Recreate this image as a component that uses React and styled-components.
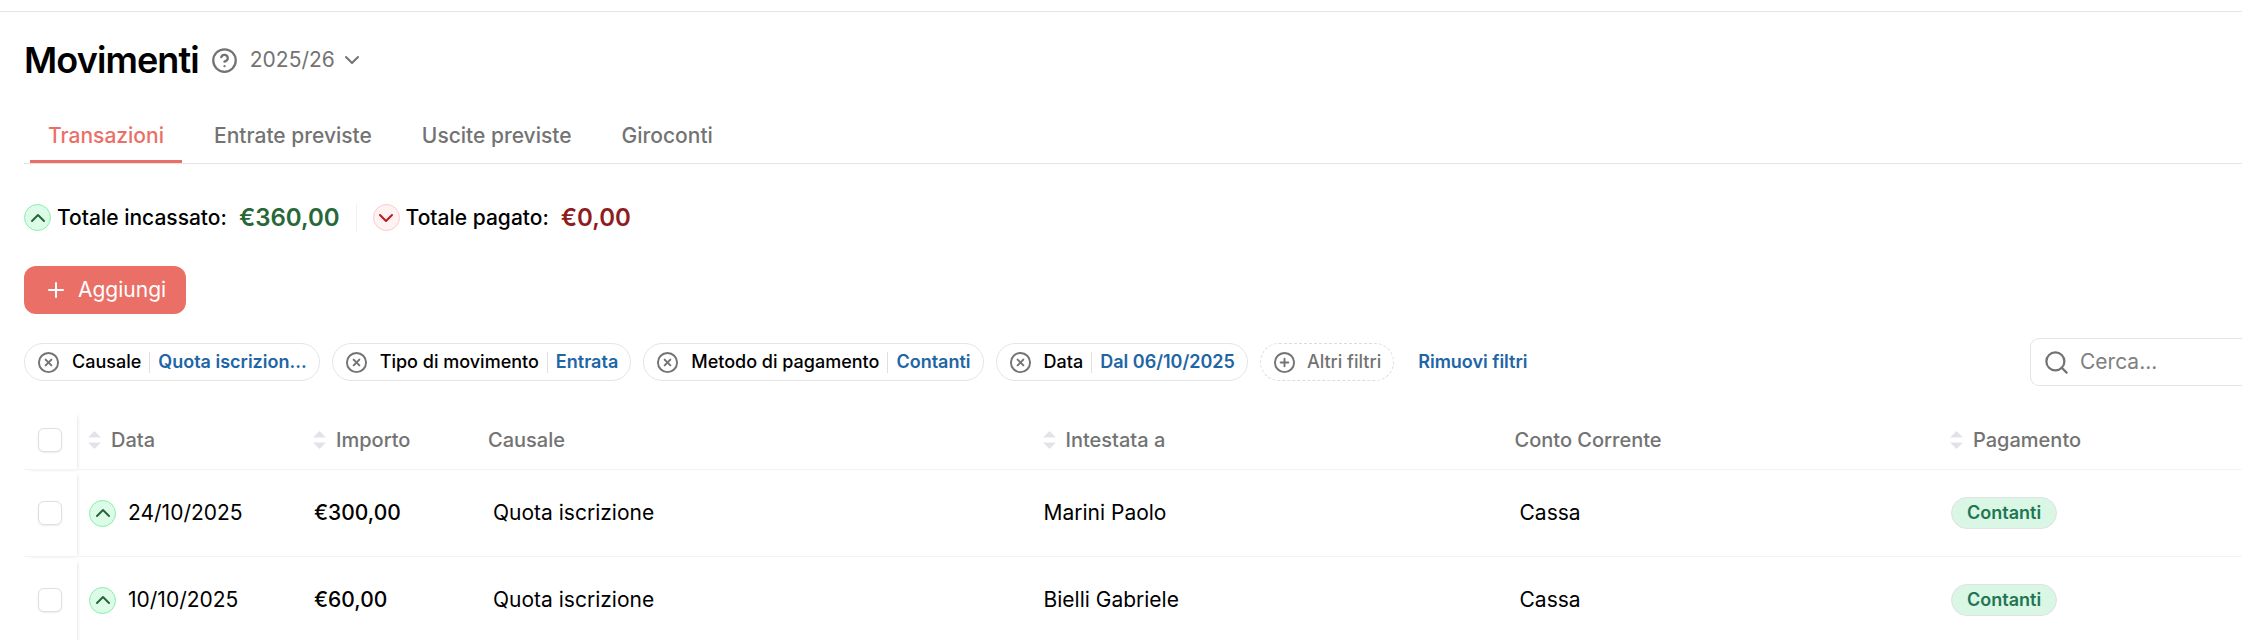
import styled, { createGlobalStyle } from "styled-components"
import { ChevronDown, ChevronUp, CircleHelp, CirclePlus, CircleX, Plus, Search } from "lucide-react"

const GlobalStyle = createGlobalStyle`
    * {
        box-sizing: border-box;
    }

    body {
        margin: 0;
        background-color: #ffffff;
        color: #0a0a0a;
        font-family: Inter, "Liberation Sans", sans-serif;
        font-size: 21px;
        line-height: 30px;
        overflow: hidden;
    }

    button, input, select {
        margin: 0;
        padding: 0;
        border: none;
        background: none;
        color: inherit;
        font: inherit;
    }

    svg {
        display: block;
        flex-shrink: 0;
    }
`

const Page = styled.main`
    display: flex;
    flex-direction: column;
    margin-top: 11px;
    padding: 27px 0 0 24px;
    border-top: 1px solid #e5e5e5;
`

const TitleRow = styled.header`
    display: flex;
    align-items: center;
    gap: 12px;
    height: 42px;
`

const Title = styled.h1`
    margin: 0;
    color: #000000;
    font-size: 36px;
    font-weight: 600;
    line-height: 42px;
    letter-spacing: -0.025em;
`

const HelpButton = styled.button`
    color: #737373;
`

const YearPicker = styled.label`
    display: grid;
    grid-template-columns: auto 24px;
    align-items: center;
    color: #737373;
`

const YearSelect = styled.select`
    grid-area: 1 / 1 / 2 / 3;
    appearance: none;
    padding-right: 28px;
`

const YearArrow = styled(ChevronDown)`
    grid-area: 1 / 2 / 2 / 3;
    pointer-events: none;
`

const Tabs = styled.nav`
    display: flex;
    gap: 14px;
    margin-top: 30px;
    padding-left: 6px;
    border-bottom: 1px solid #e5e5e5;
`

const Tab = styled.a`
    padding: 10px 18px 9px;
    border-bottom: 3px solid ${({ $active }) => ($active ? "#ea7067" : "transparent")};
    color: ${({ $active }) => ($active ? "#ea7067" : "#737373")};
    font-weight: 500;
    text-decoration: none;
`

const Totals = styled.section`
    display: flex;
    align-items: center;
    gap: 16px;
    height: 29px;
    margin-top: 39px;
`

const Total = styled.div`
    display: flex;
    align-items: center;
    height: 29px;
    color: #000000;
    font-weight: 500;
`

const TotalLabel = styled.span`
    margin: 0 12px 0 6px;
`

const Amount = styled.strong`
    color: ${({ $out }) => ($out ? "#8f1d1d" : "#276738")};
    font-size: 24px;
    font-weight: 600;
`

const Direction = styled.span`
    display: flex;
    align-items: center;
    justify-content: center;
    width: 27px;
    height: 27px;
    border: 1px solid ${({ $out }) => ($out ? "#fecaca" : "#86efac")};
    border-radius: 50%;
    background-color: ${({ $out }) => ($out ? "#fef2f2" : "#dcfce7")};
    color: ${({ $out }) => ($out ? "#b91c1c" : "#276738")};
`

const Divider = styled.span`
    width: 1px;
    height: ${({ $tall }) => ($tall ? "28px" : "21px")};
    background-color: ${({ $tall }) => ($tall ? "#f0f0f0" : "#e0e0e0")};
`

const AddButton = styled.button`
    display: flex;
    align-items: center;
    align-self: flex-start;
    gap: 10px;
    height: 48px;
    margin-top: 34px;
    padding: 0 20px;
    border-radius: 12px;
    background-color: #ea7067;
    color: #ffffff;
`

const Toolbar = styled.section`
    display: flex;
    align-items: center;
    justify-content: space-between;
    margin-top: 24px;
`

const Filters = styled.div`
    display: flex;
    align-items: center;
    gap: 12px;
    font-size: 18px;
    font-weight: 500;
`

const Chip = styled.div`
    display: flex;
    align-items: center;
    gap: 8px;
    height: 38px;
    padding: 0 12px;
    border: 1px solid #e5e5e5;
    border-radius: 19px;
    color: #000000;
`

const ChipRemove = styled.button`
    margin-right: 4px;
    color: #737373;
`

const ChipValue = styled.button`
    color: #2065a5;
    font-weight: 600;
`

const MoreFilters = styled.button`
    display: flex;
    align-items: center;
    gap: 11px;
    height: 38px;
    padding: 0 12px;
    border: 1px dashed #dcdcdc;
    border-radius: 19px;
    color: #737373;
`

const ClearFilters = styled.button`
    margin-left: 12px;
    color: #2065a5;
    font-weight: 600;
`

const SearchBox = styled.label`
    display: flex;
    align-items: center;
    gap: 10px;
    width: 212px;
    height: 48px;
    padding-left: 12px;
    border: 1px solid #e5e5e5;
    border-right: none;
    border-radius: 9px 0 0 9px;
    color: #737373;
`

const SearchInput = styled.input`
    min-width: 0;
    flex: 1;
    outline: none;

    &::placeholder {
        color: #808080;
        opacity: 1;
    }
`

const Table = styled.table`
    width: 100%;
    margin-top: 25px;
    border-spacing: 0;
    table-layout: fixed;
`

const Col = styled.col`
    width: ${({ $width }) => $width};
`

const HeadCell = styled.th`
    height: 59px;
    padding: 0 11px;
    border-bottom: 1px solid #f3f3f3;
    color: #737373;
    font-size: 20px;
    font-weight: 500;
    text-align: left;
`

const SortButton = styled.button`
    display: flex;
    align-items: center;
    gap: 10px;
`

const Cell = styled.td`
    height: 87px;
    padding: 0 ${({ $inset }) => ($inset ? "16px" : "12px")};
    border-bottom: 1px solid #f3f3f3;
    color: #000000;
    font-weight: ${({ $strong }) => ($strong ? 500 : 400)};
`

const CheckCell = styled.td`
    padding: 0 14px;
    border-bottom: 1px solid #f3f3f3;
    box-shadow: 3px 2px 4px -3px rgba(0, 0, 0, 0.16);
`

const Checkbox = styled.input`
    display: block;
    appearance: none;
    width: 24px;
    height: 24px;
    border: 1px solid #dfdfe2;
    border-radius: 6px;
    background-color: #ffffff;
    box-shadow: 0 1px 2px rgba(0, 0, 0, 0.08);
`

const DateValue = styled.div`
    display: flex;
    align-items: center;
    gap: 12px;
`

const Badge = styled.span`
    display: inline-flex;
    align-items: center;
    height: 32px;
    padding: 0 15px;
    border: 1px solid #dfe3e1;
    border-radius: 16px;
    background-color: #d9f7e4;
    color: #227553;
    font-size: 18px;
    font-weight: 600;
`

const tabs = ["Transazioni", "Entrate previste", "Uscite previste", "Giroconti"]

const filters = [
    { name: "Causale", value: "Quota iscrizion..." },
    { name: "Tipo di movimento", value: "Entrata" },
    { name: "Metodo di pagamento", value: "Contanti" },
    { name: "Data", value: "Dal 06/10/2025" },
]

const columns = [
    { name: "Data", width: "225px", sortable: true },
    { name: "Importo", width: "175px", sortable: true },
    { name: "Causale", width: "25%" },
    { name: "Intestata a", width: "472px", sortable: true },
    { name: "Conto Corrente", width: "auto" },
    { name: "Pagamento", width: "303px", sortable: true },
]

const movements = [
    { date: "24/10/2025", amount: "€300,00", reason: "Quota iscrizione", holder: "Marini Paolo", account: "Cassa", payment: "Contanti" },
    { date: "10/10/2025", amount: "€60,00", reason: "Quota iscrizione", holder: "Bielli Gabriele", account: "Cassa", payment: "Contanti" },
]

function SortIcon() {
    return (
        <svg width="13" height="20" viewBox="0 0 13 20" fill="#e2e3e8" aria-hidden="true">
            <path d="M6.5 1 L13 7.5 H0 Z" />
            <path d="M6.5 19 L0 12.5 H13 Z" />
        </svg>
    )
}

function App() {
    return (
        <>
            <GlobalStyle />
            <Page>
                <TitleRow>
                    <Title>Movimenti</Title>
                    <HelpButton type="button" aria-label="Aiuto">
                        <CircleHelp size={27} strokeWidth={2} />
                    </HelpButton>
                    <YearPicker>
                        <YearSelect aria-label="Anno" defaultValue="2025/26">
                            <option>2025/26</option>
                        </YearSelect>
                        <YearArrow size={24} strokeWidth={2} />
                    </YearPicker>
                </TitleRow>
                <Tabs>
                    {tabs.map((tab, i) => (
                        <Tab key={tab} href="#" $active={i === 0}>{tab}</Tab>
                    ))}
                </Tabs>
                <Totals>
                    <Total>
                        <Direction><ChevronUp size={24} /></Direction>
                        <TotalLabel>Totale incassato:</TotalLabel>
                        <Amount>€360,00</Amount>
                    </Total>
                    <Divider $tall />
                    <Total>
                        <Direction $out><ChevronDown size={24} /></Direction>
                        <TotalLabel>Totale pagato:</TotalLabel>
                        <Amount $out>€0,00</Amount>
                    </Total>
                </Totals>
                <AddButton type="button">
                    <Plus size={24} strokeWidth={2} />
                    Aggiungi
                </AddButton>
                <Toolbar>
                    <Filters>
                        {filters.map((filter) => (
                            <Chip key={filter.name}>
                                <ChipRemove type="button" aria-label={`Rimuovi ${filter.name}`}>
                                    <CircleX size={23} strokeWidth={2} />
                                </ChipRemove>
                                {filter.name}
                                <Divider />
                                <ChipValue type="button">{filter.value}</ChipValue>
                            </Chip>
                        ))}
                        <MoreFilters type="button">
                            <CirclePlus size={23} strokeWidth={2} />
                            Altri filtri
                        </MoreFilters>
                        <ClearFilters type="button">Rimuovi filtri</ClearFilters>
                    </Filters>
                    <SearchBox>
                        <Search size={27} strokeWidth={2} />
                        <SearchInput type="text" placeholder="Cerca..." aria-label="Cerca" />
                    </SearchBox>
                </Toolbar>
                <Table>
                    <colgroup>
                        <Col $width="53px" />
                        {columns.map((column) => (
                            <Col key={column.name} $width={column.width} />
                        ))}
                    </colgroup>
                    <thead>
                        <tr>
                            <CheckCell as="th">
                                <Checkbox type="checkbox" aria-label="Seleziona tutti" />
                            </CheckCell>
                            {columns.map((column) => (
                                <HeadCell key={column.name} scope="col">
                                    {column.sortable ? (
                                        <SortButton type="button">
                                            <SortIcon />
                                            {column.name}
                                        </SortButton>
                                    ) : column.name}
                                </HeadCell>
                            ))}
                        </tr>
                    </thead>
                    <tbody>
                        {movements.map((row) => (
                            <tr key={row.date}>
                                <CheckCell>
                                    <Checkbox type="checkbox" aria-label={`Seleziona ${row.date}`} />
                                </CheckCell>
                                <Cell>
                                    <DateValue>
                                        <Direction><ChevronUp size={24} /></Direction>
                                        {row.date}
                                    </DateValue>
                                </Cell>
                                <Cell $strong>{row.amount}</Cell>
                                <Cell $inset>{row.reason}</Cell>
                                <Cell>{row.holder}</Cell>
                                <Cell $inset>{row.account}</Cell>
                                <Cell><Badge>{row.payment}</Badge></Cell>
                            </tr>
                        ))}
                    </tbody>
                </Table>
            </Page>
        </>
    )
}

export default App
